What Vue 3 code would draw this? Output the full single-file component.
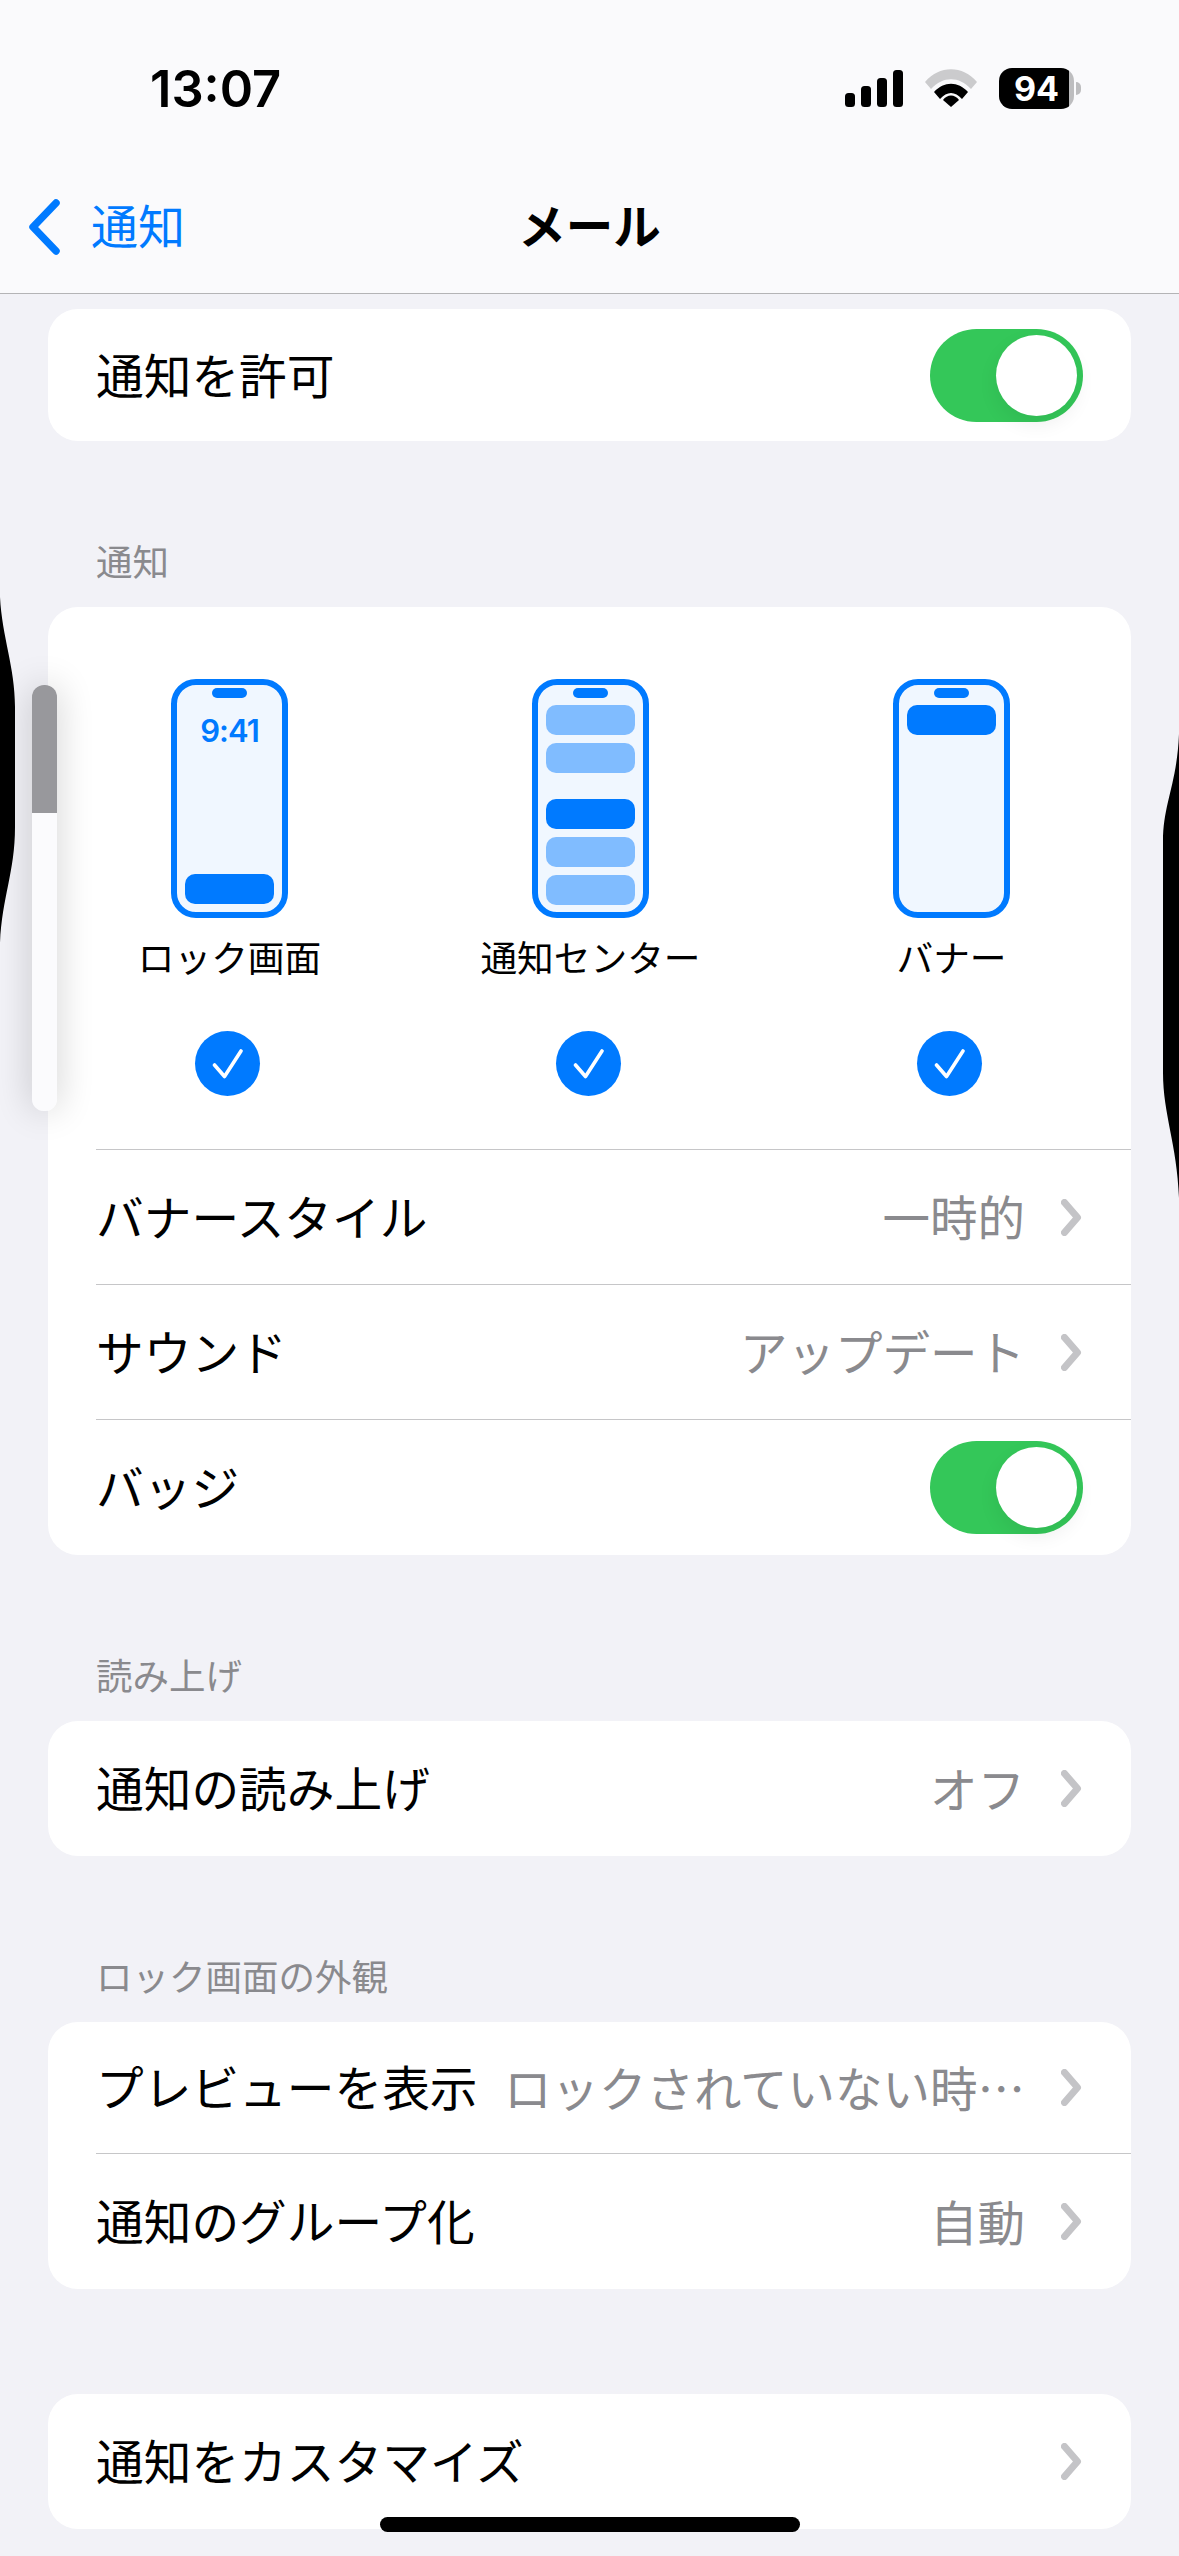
<script setup>
const options = [
  { label: 'ロック画面', kind: 'lock' },
  { label: '通知センター', kind: 'center' },
  { label: 'バナー', kind: 'banner' },
]
</script>

<template>
  <div class="screen">
    <header class="header">
      <div class="status">
        <span class="time">13:07</span>
        <div class="status-icons">
          <svg class="signal" width="58" height="37" viewBox="0 0 58 37">
            <rect x="0" y="23" width="10" height="14" rx="3.5" />
            <rect x="16" y="16" width="10" height="21" rx="3.5" />
            <rect x="32" y="8" width="10" height="29" rx="3.5" />
            <rect x="48" y="0" width="10" height="37" rx="3.5" />
          </svg>
          <svg class="wifi" width="52" height="38" viewBox="0 0 52 38">
            <path fill="#cbcbcd" d="M0 13C14-4 38-4 52 13L46 20C34 7 18 7 6 20Z" />
            <path d="M9 23C19 12 33 12 43 23L37 30C30 22 22 22 15 30Z" />
            <path d="M18 31C22 25 30 25 34 31L26 38Z" />
          </svg>
          <div class="battery">
            <div class="battery-body">94</div>
            <div class="battery-tip"></div>
          </div>
        </div>
      </div>
      <nav class="nav">
        <div class="back">
          <svg width="32" height="56" viewBox="0 0 32 56">
            <path d="M28 4L5 28L28 52" fill="none" stroke="#007aff" stroke-width="7.5" stroke-linecap="round" stroke-linejoin="round" />
          </svg>
          <span class="back-text">通知</span>
        </div>
        <div class="title">メール</div>
        <div></div>
      </nav>
    </header>

    <main class="content">
      <section class="card card-first">
        <div class="row row-short">
          <span class="row-label">通知を許可</span>
          <div class="toggle"><div class="knob"></div></div>
        </div>
      </section>

      <h2 class="section-label">通知</h2>
      <section class="card">
        <div class="picker">
          <div v-for="o in options" :key="o.kind" class="option">
            <div class="phone">
              <div class="notch"></div>
              <template v-if="o.kind === 'lock'">
                <div class="clock">9:41</div>
                <div class="bar bar-bottom"></div>
              </template>
              <template v-else-if="o.kind === 'center'">
                <div class="bar bar-light"></div>
                <div class="bar bar-light"></div>
                <div class="bar bar-break"></div>
                <div class="bar bar-light"></div>
                <div class="bar bar-light"></div>
              </template>
              <div v-else class="bar"></div>
            </div>
            <div class="option-label">{{ o.label }}</div>
            <div class="check">
              <svg width="32" height="32" viewBox="0 0 32 32">
                <path d="M2.5 17L12.5 28.5L29 3" fill="none" stroke="#fff" stroke-width="3.6" stroke-linecap="round" stroke-linejoin="round" />
              </svg>
            </div>
          </div>
        </div>
        <div class="row row-sep">
          <span class="row-label">バナースタイル</span>
          <div class="detail">
            <span class="value">一時的</span>
            <svg class="chev" width="21" height="37" viewBox="0 0 21 37"><path d="M3.5 3.5L16.5 18.5L3.5 33.5" /></svg>
          </div>
        </div>
        <div class="row row-sep">
          <span class="row-label">サウンド</span>
          <div class="detail">
            <span class="value">アップデート</span>
            <svg class="chev" width="21" height="37" viewBox="0 0 21 37"><path d="M3.5 3.5L16.5 18.5L3.5 33.5" /></svg>
          </div>
        </div>
        <div class="row row-sep row-last">
          <span class="row-label">バッジ</span>
          <div class="toggle"><div class="knob"></div></div>
        </div>
      </section>

      <h2 class="section-label">読み上げ</h2>
      <section class="card">
        <div class="row">
          <span class="row-label">通知の読み上げ</span>
          <div class="detail">
            <span class="value">オフ</span>
            <svg class="chev" width="21" height="37" viewBox="0 0 21 37"><path d="M3.5 3.5L16.5 18.5L3.5 33.5" /></svg>
          </div>
        </div>
      </section>

      <h2 class="section-label">ロック画面の外観</h2>
      <section class="card">
        <div class="row row-preview">
          <span class="row-label">プレビューを表示</span>
          <div class="detail">
            <span class="value">ロックされていない時…</span>
            <svg class="chev" width="21" height="37" viewBox="0 0 21 37"><path d="M3.5 3.5L16.5 18.5L3.5 33.5" /></svg>
          </div>
        </div>
        <div class="row row-sep row-last">
          <span class="row-label">通知のグループ化</span>
          <div class="detail">
            <span class="value">自動</span>
            <svg class="chev" width="21" height="37" viewBox="0 0 21 37"><path d="M3.5 3.5L16.5 18.5L3.5 33.5" /></svg>
          </div>
        </div>
      </section>

      <section class="card card-last">
        <div class="row">
          <span class="row-label">通知をカスタマイズ</span>
          <div class="detail">
            <svg class="chev" width="21" height="37" viewBox="0 0 21 37"><path d="M3.5 3.5L16.5 18.5L3.5 33.5" /></svg>
          </div>
        </div>
      </section>
    </main>

    <svg class="edge edge-left" width="16" height="346" viewBox="0 0 16 346">
      <path d="M0 0C2 40 15 70 15 110L15 230C15 275 2 300 0 346Z" />
    </svg>
    <svg class="edge edge-right" width="16" height="464" viewBox="0 0 16 464">
      <path d="M16 0C14 50 0 70 0 107L0 339C0 380 14 410 16 464Z" />
    </svg>
    <div class="volume"></div>
    <div class="home-indicator"></div>
  </div>
</template>

<style scoped>
.screen {
  position: relative;
  width: 1179px;
  height: 2556px;
  overflow: hidden;
  background: #f2f2f7;
  color: #000;
  font-family: "Noto Sans CJK JP", "Noto Sans", sans-serif;
}
.header {
  height: 294px;
  box-sizing: border-box;
  background: #fafafc;
  border-bottom: 1.5px solid #b4b4b6;
}
.status {
  height: 176px;
  box-sizing: border-box;
  padding: 0 98px 0 150px;
  display: flex;
  align-items: center;
  justify-content: space-between;
}
.time {
  font-family: Inter, "Liberation Sans", sans-serif;
  font-size: 50.6px;
  font-weight: 600;
}
.status-icons {
  display: flex;
  align-items: center;
  gap: 22px;
}
.signal, .wifi { display: block; }
.battery {
  display: flex;
  align-items: center;
  gap: 2px;
}
.battery-body {
  width: 75px;
  height: 41px;
  box-sizing: border-box;
  border-radius: 13px;
  background: linear-gradient(to right, #000 94%, #bdbdbf 94%);
  color: #fff;
  font-family: Inter, "Liberation Sans", sans-serif;
  font-size: 34px;
  font-weight: 700;
  line-height: 41px;
  text-align: center;
}
.battery-tip {
  width: 5px;
  height: 13px;
  border-radius: 0 6px 6px 0;
  background: #bdbdbf;
}
.nav {
  height: 102px;
  display: grid;
  grid-template-columns: 1fr auto 1fr;
  align-items: center;
}
.back {
  display: flex;
  align-items: center;
  gap: 31px;
  padding-left: 28px;
  color: #007aff;
  font-size: 47px;
  line-height: 56px;
}
.back svg { display: block; }
.back-text { padding-bottom: 6px; }
.title {
  padding-bottom: 6px;
  font-size: 47.5px;
  font-weight: 700;
  line-height: 56px;
}
.content {
  padding: 0 48px;
}
.card {
  background: #fff;
  border-radius: 30px;
  overflow: hidden;
}
.card-first { margin-top: 15px; }
.card-last { margin-top: 105px; }
.section-label {
  margin: 100px 0 22px;
  padding-left: 48px;
  height: 44px;
  color: #8a8a8e;
  font-size: 36.5px;
  font-weight: 400;
  line-height: 39px;
}
.row {
  height: 135px;
  box-sizing: border-box;
  margin-left: 48px;
  padding-right: 48px;
  display: flex;
  align-items: center;
  justify-content: space-between;
}
.row-short { height: 132px; }
.row-preview { height: 131px; }
.row-sep { border-top: 1.5px solid #c6c6c8; }
.row-last { height: 136px; }
.row-label {
  padding-bottom: 3px;
  font-size: 47.7px;
  line-height: 60px;
  white-space: nowrap;
}
.detail {
  display: flex;
  align-items: center;
  gap: 36px;
}
.value {
  padding-bottom: 2px;
  color: #8a8a8e;
  font-size: 47.5px;
  line-height: 60px;
  white-space: nowrap;
}
.chev { display: block; margin-right: 1px; }
.chev path {
  fill: none;
  stroke: #c4c4c7;
  stroke-width: 7;
  stroke-linecap: round;
  stroke-linejoin: round;
}
.toggle {
  width: 153px;
  height: 93px;
  box-sizing: border-box;
  padding: 6px;
  border-radius: 47px;
  background: #34c759;
  display: flex;
  justify-content: flex-end;
}
.knob {
  width: 81px;
  height: 81px;
  border-radius: 50%;
  background: #fff;
  box-shadow: 0 8px 20px rgba(0, 0, 0, 0.07);
}
.picker {
  height: 542px;
  box-sizing: border-box;
  padding: 72px 1px 0;
  display: grid;
  grid-template-columns: repeat(3, 361px);
}
.option {
  display: flex;
  flex-direction: column;
  align-items: center;
}
.phone {
  width: 117px;
  height: 239px;
  box-sizing: border-box;
  padding: 3px 8px 8px;
  border: 6px solid #007aff;
  border-radius: 25px;
  background: #f0f7ff;
  display: flex;
  flex-direction: column;
  align-items: center;
}
.notch {
  flex: none;
  width: 35px;
  height: 10px;
  border-radius: 5px;
  background: #007aff;
  margin-bottom: 7px;
}
.clock {
  margin-top: 10px;
  color: #007aff;
  font-family: Inter, "Liberation Sans", sans-serif;
  font-size: 31px;
  font-weight: 600;
  letter-spacing: -1px;
  line-height: 32px;
}
.bar {
  flex: none;
  width: 89px;
  height: 30px;
  border-radius: 10px;
  background: #007aff;
}
.bar-light {
  background: #80bcff;
  margin-bottom: 8px;
}
.bar-break {
  margin-top: 18px;
  margin-bottom: 8px;
}
.bar-bottom { margin-top: auto; }
.option-label {
  margin-top: 20px;
  height: 40px;
  font-size: 36.7px;
  line-height: 37px;
  white-space: nowrap;
}
.check {
  margin-top: 53px;
  margin-right: 4px;
  width: 65px;
  height: 65px;
  border-radius: 50%;
  background: #007aff;
  display: flex;
  align-items: center;
  justify-content: center;
}
.edge { position: absolute; display: block; }
.edge path { fill: #000; }
.edge-left { left: 0; top: 597px; }
.edge-right { right: 0; top: 734px; }
.volume {
  position: absolute;
  left: 32px;
  top: 685px;
  width: 25px;
  height: 426px;
  border-radius: 12px;
  background: linear-gradient(#98989c 128px, #fbfbfd 128px);
  box-shadow: 0 0 36px rgba(0, 0, 0, 0.2);
}
.home-indicator {
  position: absolute;
  left: 380px;
  bottom: 24px;
  width: 420px;
  height: 15px;
  border-radius: 8px;
  background: #000;
}
</style>
